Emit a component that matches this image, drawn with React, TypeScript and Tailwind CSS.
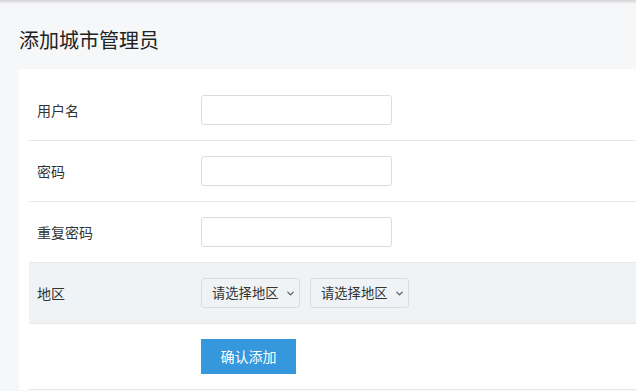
import { ChevronDown } from "lucide-react";

const font = { fontFamily: '"Noto Sans CJK SC", "Noto Sans", sans-serif' };

function Row({
  label,
  gray,
  children,
}: {
  label: string;
  gray?: boolean;
  children: React.ReactNode;
}) {
  return (
    <div
      className={`flex items-center h-[61px] border-b border-[#e8e8e8] ${
        gray ? "bg-[#eff3f6]" : ""
      }`}
    >
      <div className="w-[172px] pl-2 text-[14px] text-[#333]">{label}</div>
      {children}
    </div>
  );
}

function Input() {
  return (
    <input
      className="w-[191px] h-[30px] border border-[#dcdcdc] rounded-[3px] bg-white px-2 text-[14px] outline-none"
      type="text"
    />
  );
}

function Select() {
  return (
    <div className="relative w-[99px] h-[30px] border border-[#dcdcdc] rounded-[3px] flex items-center pl-[10px] text-[13.3px] text-[#333]">
      请选择地区
      <ChevronDown
        size={11}
        strokeWidth={2.5}
        className="absolute right-[3px] top-[9px] text-[#555]"
      />
    </div>
  );
}

export default function App() {
  return (
    <div className="relative min-h-[391px] w-[636px] overflow-hidden bg-[#f6f7f9]" style={font}>
      <div className="absolute top-0 left-0 right-0 h-[4px] bg-gradient-to-b from-[#d4d4d6] to-transparent" />
      <div className="pl-[19px] pt-[26px]">
        <h1 className="text-[20px] leading-[28px] text-[#222] mb-[15px]">添加城市管理员</h1>
        <div className="bg-white w-[680px] pt-[11px] pl-[10px]">
          <Row label="用户名">
            <Input />
          </Row>
          <Row label="密码">
            <Input />
          </Row>
          <Row label="重复密码">
            <Input />
          </Row>
          <Row label="地区" gray>
            <div className="flex gap-[10px]">
              <Select />
              <Select />
            </div>
          </Row>
          <div className="flex h-[66px] pt-[15px] border-b border-[#e8e8e8]">
            <div className="w-[172px]" />
            <button className="w-[95px] h-[35px] bg-[#3598dc] text-white text-[14px]">
              确认添加
            </button>
          </div>
        </div>
      </div>
    </div>
  );
}
